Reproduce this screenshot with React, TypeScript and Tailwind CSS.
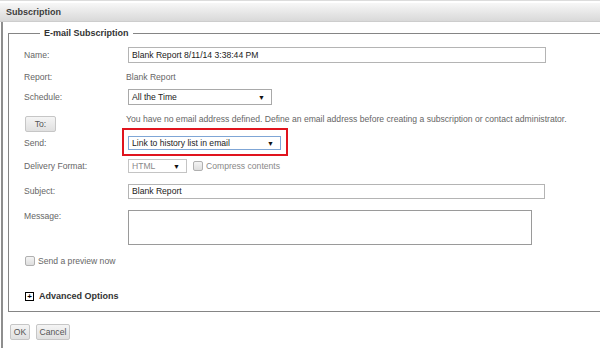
import React from 'react';

const font = { fontFamily: '"Liberation Sans", Arial, sans-serif' };

function Select({ value, width, focused, disabled }: { value: string; width: string; focused?: boolean; disabled?: boolean }) {
  const border = focused ? 'border-[#7fa6d6]' : disabled ? 'border-[#c4c4c4]' : 'border-[#a9a9a9]';
  return (
    <div className={`${width} h-full flex items-center justify-between bg-white border ${border} pl-[3px] pr-[6px]`}>
      <span className={disabled ? 'text-[#8a8a8a]' : 'text-[#222]'}>{value}</span>
      <span className="text-[7px] text-[#111]">▼</span>
    </div>
  );
}

function Checkbox() {
  return <span className="block w-[10px] h-[10px] border border-[#b0b0b0] rounded-[2px] bg-gradient-to-b from-[#f4f4f4] to-[#dedede]" />;
}

function Button({ label, width }: { label: string; width: string }) {
  return (
    <div className={`${width} h-[16px] flex items-center justify-center border border-[#c6c6c6] rounded-[2px] bg-gradient-to-b from-[#f5f5f5] to-[#e0e0e0] text-[#555]`}>
      {label}
    </div>
  );
}

export default function App() {
  return (
    <div className="w-[600px] h-[348px] bg-white overflow-hidden text-[8.6px] leading-none" style={font}>
      <div className="h-[2px] border-t border-[#dcdcdc]" />
      <div className="h-[1px]" />
      <div className="h-[19px] flex items-center pl-[6px] bg-gradient-to-b from-[#f7f7f7] to-[#d9d9d9] border-b border-[#cdcdcd]">
        <span className="font-bold text-[9px] text-[#3c3c3c]">Subscription</span>
      </div>

      <div className="ml-px border-l-2 border-[#8e8e8e] h-[326px] pt-[5px] pl-[5px]">
        <fieldset className="w-[620px] border border-[#858585] pl-[15px] pb-[10px]">
          <legend className="ml-[16px] px-[4px] h-[12px] leading-[12px] font-bold text-[9px] text-[#333]">E-mail Subscription</legend>

          <div className="flex flex-col text-[#666]">
            <div className="mt-[8px] h-[16px] flex items-center">
              <span className="w-[104px]">Name:</span>
              <div className="w-[418px] h-full flex items-center border border-[#b4b4b4] px-[3px] text-[#222]">Blank Report 8/11/14 3:38:44 PM</div>
            </div>

            <div className="mt-[7px] h-[14px] flex items-center">
              <span className="w-[104px]">Report:</span>
              <span className="-ml-[2px]">Blank Report</span>
            </div>

            <div className="mt-[5px] h-[16px] flex items-center">
              <span className="w-[104px]">Schedule:</span>
              <Select value="All the Time" width="w-[144px]" />
            </div>

            <div className="mt-[11px] h-[16px] flex items-start">
              <div className="w-[103px]">
                <div className="ml-px">
                  <Button label="To:" width="w-[31px]" />
                </div>
              </div>
              <span className="-ml-[1px] mt-[-1px]">You have no email address defined. Define an email address before creating a subscription or contact administrator.</span>
            </div>

            <div className="mt-[4px] h-[14px] flex items-center">
              <span className="w-[104px]">Send:</span>
              <div className="relative h-full">
                <Select value="Link to history list in email" width="w-[153px]" focused />
                <div className="absolute -left-[6px] -top-[8px] -right-[7px] -bottom-[6px] border-2 border-[#e0141e]" />
              </div>
            </div>

            <div className="mt-[9px] h-[14px] flex items-center">
              <span className="w-[104px]">Delivery Format:</span>
              <Select value="HTML" width="w-[59px]" disabled />
              <span className="ml-[6px]"><Checkbox /></span>
              <span className="ml-[3px] text-[#888]">Compress contents</span>
            </div>

            <div className="mt-[11px] h-[15px] flex items-center">
              <span className="w-[104px]">Subject:</span>
              <div className="w-[417px] h-full flex items-center border border-[#b4b4b4] px-[3px] text-[#222]">Blank Report</div>
            </div>

            <div className="mt-[11px] h-[35px] flex items-start">
              <span className="w-[104px] mt-[2px]">Message:</span>
              <div className="w-[404px] h-full border border-[#9a9a9a] bg-white" />
            </div>

            <div className="mt-[11px] h-[10px] flex items-center">
              <span className="ml-px"><Checkbox /></span>
              <span className="ml-[3px]">Send a preview now</span>
            </div>

            <div className="mt-[26px] h-[9px] flex items-center">
              <span className="ml-px w-[9px] h-[9px] border border-black flex items-center justify-center text-[8px] font-bold text-black leading-none">+</span>
              <span className="ml-[5px] font-bold text-[9px] text-[#333]">Advanced Options</span>
            </div>
          </div>
        </fieldset>

        <div className="mt-[12px] flex gap-[6px] ml-[2px]">
          <Button label="OK" width="w-[20px]" />
          <Button label="Cancel" width="w-[34px]" />
        </div>
      </div>
    </div>
  );
}
